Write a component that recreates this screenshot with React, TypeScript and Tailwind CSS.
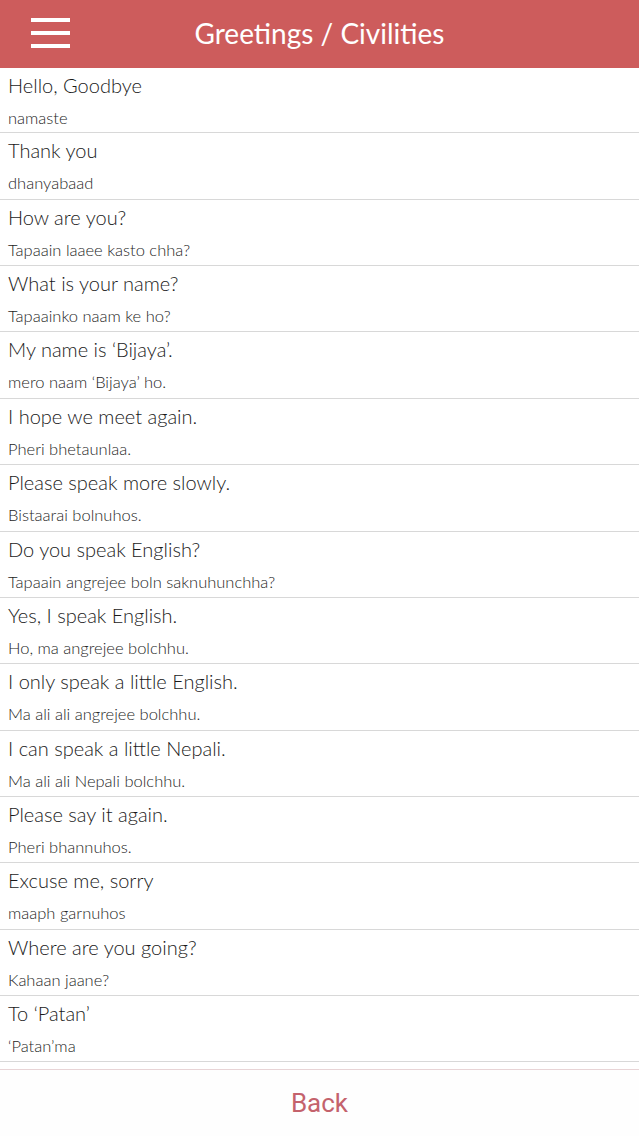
const PHRASES: { en: string; ne: string }[] = [
  { en: "Hello, Goodbye", ne: "namaste" },
  { en: "Thank you", ne: "dhanyabaad" },
  { en: "How are you?", ne: "Tapaain laaee kasto chha?" },
  { en: "What is your name?", ne: "Tapaainko naam ke ho?" },
  { en: "My name is \u2018Bijaya\u2019.", ne: "mero naam \u2018Bijaya\u2019 ho." },
  { en: "I hope we meet again.", ne: "Pheri bhetaunlaa." },
  { en: "Please speak more slowly.", ne: "Bistaarai bolnuhos." },
  { en: "Do you speak English?", ne: "Tapaain angrejee boln saknuhunchha?" },
  { en: "Yes, I speak English.", ne: "Ho, ma angrejee bolchhu." },
  { en: "I only speak a little English.", ne: "Ma ali ali angrejee bolchhu." },
  { en: "I can speak a little Nepali.", ne: "Ma ali ali Nepali bolchhu." },
  { en: "Please say it again.", ne: "Pheri bhannuhos." },
  { en: "Excuse me, sorry", ne: "maaph garnuhos" },
  { en: "Where are you going?", ne: "Kahaan jaane?" },
  { en: "To \u2018Patan\u2019", ne: "\u2018Patan\u2019ma" },
];

export default function App() {
  return (
    <div className="w-[639px] h-[1136px] flex flex-col bg-white overflow-hidden font-['Lato','Open_Sans',sans-serif]">
      {/* Header */}
      <div className="h-[68px] shrink-0 bg-[#cd5c5c] flex items-center relative">
        <button className="absolute left-[31px] top-[18px] flex flex-col gap-[9px]">
          <span className="block w-[39px] h-[4px] bg-white" />
          <span className="block w-[39px] h-[4px] bg-white" />
          <span className="block w-[39px] h-[4px] bg-white" />
        </button>
        <h1 className="w-full text-center text-white text-[28px] leading-none pb-[2px]">
          Greetings / Civilities
        </h1>
      </div>

      {/* Phrase list */}
      <div className="flex-1 overflow-hidden">
        {PHRASES.map((p, i) => (
          <div
            key={p.en}
            className={
              (i === 0 ? "h-[65.36px] " : "h-[66.36px] ") +
              "border-b border-[#d8d8d8] pl-[8px] flex flex-col"
            }
          >
            <p className="text-[20px] font-light text-[#1a1a1a] leading-none pt-[7px]">
              {p.en}
            </p>
            <p className="text-[16.5px] font-light text-[#262626] leading-none mt-[15px]">
              {p.ne}
            </p>
          </div>
        ))}
      </div>

      {/* Bottom toolbar */}
      <div className="h-[67px] shrink-0 border-t border-[#e8d4d6] bg-[#fefefe] flex items-center justify-center">
        <button className="font-['Roboto',sans-serif] text-[26px] text-[#c4626c] leading-none">
          Back
        </button>
      </div>
    </div>
  );
}
